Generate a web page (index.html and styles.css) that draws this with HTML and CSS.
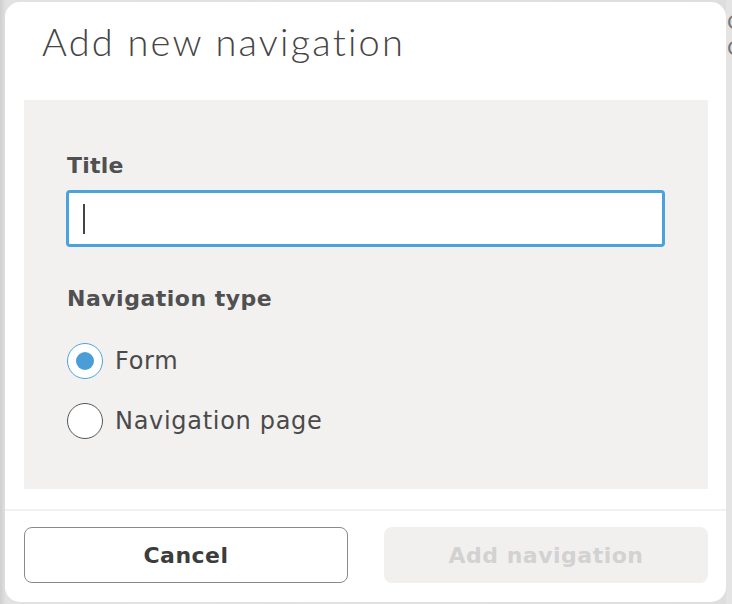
FILE: index.html
```html
<!DOCTYPE html>
<html>
<head>
<meta charset="utf-8">
<link rel="stylesheet" href="styles.css">
</head>
<body>
<div class="backdrop">
  <div class="modal">
    <div class="modal-header">
      <h1 class="modal-title">Add new navigation</h1>
    </div>
    <div class="modal-body">
      <label class="field-label">Title</label>
      <div class="text-input"><span class="caret"></span></div>
      <div class="group-label">Navigation type</div>
      <div class="radio-list">
        <div class="radio-row">
          <span class="radio checked"><span class="dot"></span></span>
          <span class="radio-text">Form</span>
        </div>
        <div class="radio-row">
          <span class="radio"></span>
          <span class="radio-text">Navigation page</span>
        </div>
      </div>
    </div>
    <div class="modal-footer">
      <button class="btn btn-cancel">Cancel</button>
      <button class="btn btn-primary" disabled>Add navigation</button>
    </div>
  </div>
  <div class="page-edge">
    <span class="edge-glyph">C</span>
    <span class="edge-glyph">C</span>
  </div>
</div>
</body>
</html>
```

FILE: styles.css
```css
html, body {
  margin: 0;
  padding: 0;
  width: 732px;
  height: 604px;
  overflow: hidden;
}
body {
  font-family: "DejaVu Sans", "Liberation Sans", sans-serif;
  color: #4a4a4a;
  background: #dcdcdc;
}
.backdrop {
  display: flex;
  height: 604px;
  background: linear-gradient(to right, #cfcfcf 0px, #e2e2e2 6px, #dedede 100%);
}
.modal {
  margin: 2px 0 2px 5px;
  width: 721px;
  height: 600px;
  flex-shrink: 0;
  background: #fff;
  border-radius: 15px;
  display: flex;
  flex-direction: column;
  box-sizing: border-box;
}
.modal-header {
  height: 98px;
  flex-shrink: 0;
  padding-left: 37px;
  box-sizing: border-box;
}
.modal-title {
  margin: 0;
  padding-top: 15px;
  font-family: "Lato", "Open Sans", sans-serif;
  font-size: 38px;
  font-weight: 300;
  line-height: 48px;
  color: #454545;
  letter-spacing: 2.2px;
}
.modal-body {
  margin: 0 18px 0 19px;
  height: 389px;
  flex-shrink: 0;
  background: #f2f1f0;
  padding: 52px 43px 0 43px;
  box-sizing: border-box;
  display: flex;
  flex-direction: column;
}
.field-label {
  font-size: 22px;
  font-weight: 700;
  line-height: 28px;
  color: #505050;
  height: 38px;
  letter-spacing: 0.2px;
}
.text-input {
  height: 57px;
  border: 3px solid #4aa3db;
  border-radius: 4px;
  background: #fff;
  box-sizing: border-box;
  margin-left: -1px;
  display: flex;
  align-items: center;
  padding-left: 14px;
}
.caret {
  width: 2px;
  height: 30px;
  background: #444;
}
.group-label {
  margin-top: 38px;
  font-size: 22px;
  font-weight: 700;
  line-height: 28px;
  color: #505050;
  letter-spacing: 0.5px;
}
.radio-list {
  margin-top: 30px;
  display: flex;
  flex-direction: column;
  gap: 24px;
}
.radio-row {
  display: flex;
  align-items: center;
  gap: 12px;
  height: 36px;
}
.radio {
  width: 36px;
  height: 36px;
  border-radius: 50%;
  border: 1px solid #555;
  background: #fff;
  box-sizing: border-box;
  display: flex;
  align-items: center;
  justify-content: center;
}
.radio.checked {
  border-color: #4aa3db;
}
.dot {
  width: 18px;
  height: 18px;
  border-radius: 50%;
  background: #4a9dd6;
}
.radio-text {
  font-size: 24px;
  font-weight: 400;
  color: #4a4a4a;
  letter-spacing: 0.7px;
}
.modal-footer {
  margin-top: 20px;
  border-top: 2px solid #f1f1f1;
  padding: 16px 18px 19px 19px;
  display: flex;
  justify-content: space-between;
}
.btn {
  width: 324px;
  height: 56px;
  border-radius: 8px;
  font-family: inherit;
  font-size: 22px;
  font-weight: 700;
  letter-spacing: 0.5px;
  box-sizing: border-box;
}
.btn-cancel {
  background: #fff;
  border: 1px solid #8a8a8a;
  color: #3c3c3c;
}
.btn-primary {
  background: #f1f0ef;
  border: none;
  color: #d2d2d2;
}
.page-edge {
  flex: 1;
  display: flex;
  flex-direction: column;
  padding-top: 12px;
  gap: 6px;
  overflow: hidden;
  background: #e4e4e4;
}
.edge-glyph {
  font-size: 20px;
  color: #777;
  margin-left: 1px;
  line-height: 20px;
}
```
